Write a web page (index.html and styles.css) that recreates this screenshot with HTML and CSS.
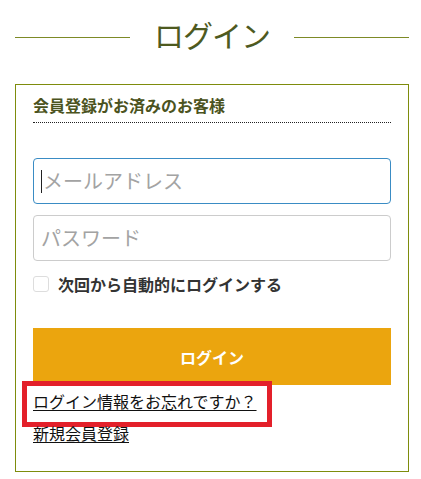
FILE: index.html
```html
<!DOCTYPE html>
<html lang="ja">
<head>
<meta charset="utf-8">
<title>ログイン</title>
<link rel="stylesheet" href="styles.css">
</head>
<body>
<div class="page">
  <div class="title-row">
    <span class="title-line"></span>
    <h1 class="title">ログイン</h1>
    <span class="title-line"></span>
  </div>
  <section class="login-box">
    <h2 class="box-heading">会員登録がお済みのお客様</h2>
    <form class="login-form">
      <div class="field field-focus"><span class="caret"></span><span class="placeholder">メールアドレス</span></div>
      <div class="field"><span class="placeholder">パスワード</span></div>
      <label class="remember"><span class="checkbox"></span><span class="remember-text">次回から自動的にログインする</span></label>
      <div class="login-button">ログイン</div>
    </form>
    <div class="links">
      <div class="link-row link-marked">
        <a class="text-link" href="#">ログイン情報をお忘れですか？</a>
        <span class="highlight"></span>
      </div>
      <div class="link-row link-second">
        <a class="text-link" href="#">新規会員登録</a>
      </div>
    </div>
  </section>
</div>
</body>
</html>
```

FILE: styles.css
```css
* { box-sizing: border-box; }
html, body { margin: 0; padding: 0; background: #fff; }
body {
  font-family: "Noto Sans CJK JP", "Noto Sans", sans-serif;
  width: 421px;
}
.page { padding: 0 12px 0 15px; }
.title-row {
  display: flex;
  align-items: center;
  gap: 24px;
  margin-top: 13px;
  height: 42px;
}
.title-line {
  flex: 1;
  height: 1px;
  background: #7d8a26;
  margin-top: 6px;
}
.title {
  margin: 0;
  font-size: 30px;
  font-weight: 400;
  line-height: 42px;
  color: #4e5a1f;
  letter-spacing: -1px;
}
.login-box {
  margin-top: 29px;
  border: 1px solid #7e8c0c;
  padding: 10px 17px 26px 17px;
}
.box-heading {
  margin: 0;
  font-size: 16px;
  font-weight: 700;
  line-height: 20px;
  color: #4b5320;
  padding-bottom: 7px;
  border-bottom: 1px dotted #222;
}
.login-form {
  display: flex;
  flex-direction: column;
  margin-top: 35px;
}
.field {
  height: 46px;
  border: 1px solid #ccc;
  border-radius: 4px;
  display: flex;
  align-items: center;
  padding-left: 7px;
  position: relative;
}
.field + .field { margin-top: 11px; }
.field-focus { border-color: #3a8cc4; }
.caret {
  width: 1px;
  height: 23px;
  background: #222;
  margin-right: 1px;
}
.placeholder {
  font-size: 20px;
  color: #a3a3a3;
  line-height: 24px;
}
.remember {
  display: flex;
  align-items: center;
  gap: 9px;
  height: 20px;
  margin-top: 13px;
}
.checkbox {
  width: 16px;
  height: 16px;
  border: 1px solid #ddd;
  border-radius: 3px;
  background: #fff;
}
.remember-text {
  font-size: 16px;
  font-weight: 700;
  color: #333;
  line-height: 20px;
}
.login-button {
  margin-top: 34px;
  height: 57px;
  background: #eba50e;
  color: #fff;
  font-size: 16px;
  font-weight: 700;
  display: flex;
  align-items: center;
  justify-content: center;
}
.links { margin-top: 4px; }
.link-row {
  position: relative;
  line-height: 24px;
}
.link-second { margin-top: 8px; }
.text-link {
  font-size: 16px;
  color: #111;
  text-decoration: underline;
  text-underline-offset: 2px;
}
.highlight {
  position: absolute;
  left: -11px;
  top: -8px;
  width: 250px;
  height: 46px;
  border: 5px solid #e3202a;
  pointer-events: none;
}
```
